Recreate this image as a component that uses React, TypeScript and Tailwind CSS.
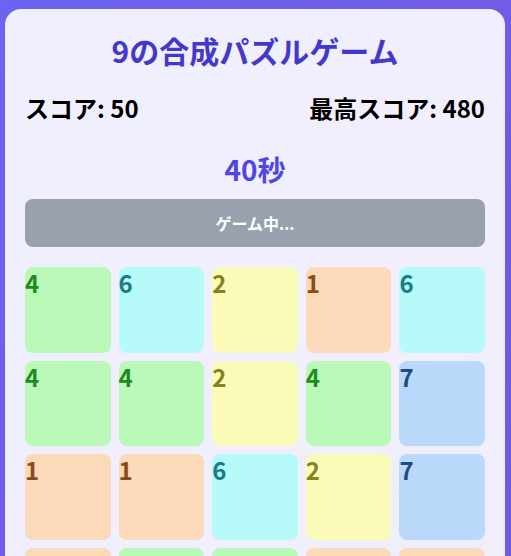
import { useState } from "react";

type TileStyle = { bg: string; text: string };

const TILE_STYLES: Record<number, TileStyle> = {
  1: { bg: "bg-[#fcd9b9]", text: "text-[#8a4b17]" },
  2: { bg: "bg-[#fafbb9]", text: "text-[#84841c]" },
  3: { bg: "bg-[#f9c9c9]", text: "text-[#8a2020]" },
  4: { bg: "bg-[#bbf9b8]", text: "text-[#1f8a1f]" },
  5: { bg: "bg-[#e5c9f9]", text: "text-[#6a2a8a]" },
  6: { bg: "bg-[#b6fafa]", text: "text-[#1a7d84]" },
  7: { bg: "bg-[#bad8f9]", text: "text-[#1e4a88]" },
  8: { bg: "bg-[#f9c9e5]", text: "text-[#8a2060]" },
};

const INITIAL_BOARD: number[][] = [
  [4, 6, 2, 1, 6],
  [4, 4, 2, 4, 7],
  [1, 1, 6, 2, 7],
  [1, 4, 4, 1, 1],
  [2, 6, 7, 4, 2],
];

export default function App() {
  const [board] = useState(INITIAL_BOARD);
  const [score] = useState(50);
  const [best] = useState(480);
  const [time] = useState(40);

  return (
    <div className="min-h-screen bg-gradient-to-br from-[#6c63ef] to-[#7355de] pt-[9px] pb-6 font-['Noto_Sans_CJK_JP',sans-serif]">
      <div className="ml-[5px] w-[500px] rounded-2xl bg-white/90 px-5 pt-[23px] pb-5">
        <h1 className="mb-6 text-center text-3xl font-bold text-[#4338ca]">9の合成パズルゲーム</h1>

        <div className="flex items-center justify-between text-2xl font-bold text-black">
          <span>スコア: {score}</span>
          <span>最高スコア: {best}</span>
        </div>

        <p className="mt-[27px] mb-3 text-center text-[28px] leading-9 font-bold text-[#4f46e5]">{time}秒</p>

        <button
          disabled
          className="mb-5 w-full rounded-lg bg-gray-400 py-3 text-base font-bold text-white"
        >
          ゲーム中...
        </button>

        <div className="grid grid-cols-5 gap-2">
          {board.flatMap((row, r) =>
            row.map((v, c) => {
              const s = TILE_STYLES[v];
              return (
                <div
                  key={`${r}-${c}`}
                  className={`aspect-square rounded-lg text-2xl font-bold ${s.bg} ${s.text}`}
                >
                  {v}
                </div>
              );
            })
          )}
        </div>
      </div>
    </div>
  );
}
